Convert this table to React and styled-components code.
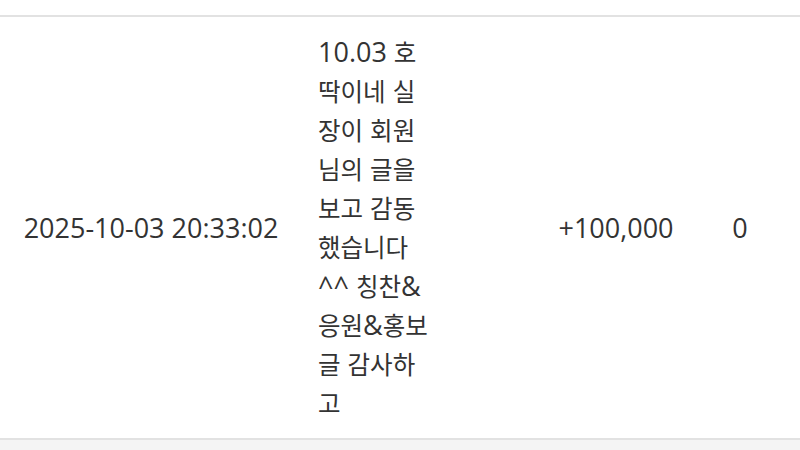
import React from 'react';
import styled, { createGlobalStyle } from 'styled-components';

const GlobalStyle = createGlobalStyle`
  html, body {
    margin: 0;
    padding: 0;
    background: #f4f4f4;
  }
  body {
    font-family: "Open Sans", "Noto Sans CJK KR", sans-serif;
    color: #333;
  }
`;

const Page = styled.div`
  width: 800px;
  height: 450px;
  overflow: hidden;
  background: #f4f4f4;
`;

const TopSpace = styled.div`
  height: 15px;
  background: #fff;
`;

const Row = styled.div`
  display: grid;
  grid-template-columns: 302px 238px 152px 96px 1fr;
  align-items: center;
  background: #fff;
  border-top: 2px solid #e2e2e2;
  border-bottom: 2px solid #e2e2e2;
  font-size: 27px;
  line-height: 39px;
`;

const Cell = styled.div`
  text-align: ${({ align }) => align || 'center'};
  white-space: nowrap;
`;

const Content = styled.div`
  padding: 15px 0 16px 16px;
  width: 118px;
  word-break: break-all;
  text-align: left;
`;

const Ko = styled.span`
  font-family: "Noto Sans CJK KR", sans-serif;
  font-size: 24.5px;
`;

const Keep = styled.span`
  white-space: nowrap;
`;

const HANGUL = /[\uac00-\ud7a3]/;

const formatText = (text) =>
  text.split(/([\uac00-\ud7a3]+|\^+)/).map((part, i) => {
    if (HANGUL.test(part)) return <Ko key={i}>{part}</Ko>;
    if (part.startsWith('^')) return <Keep key={i}>{part}</Keep>;
    return part;
  });

const row = {
  date: '2025-10-03 20:33:02',
  text: '10.03 호딱이네 실장이 회원님의 글을 보고 감동했습니다 ^^ 칭찬&응원&홍보글 감사하고',
  amount: '+100,000',
  balance: '0',
};

export default function App() {
  return (
    <Page>
      <GlobalStyle />
      <TopSpace />
      <Row>
        <Cell>{row.date}</Cell>
        <Content>{formatText(row.text)}</Content>
        <Cell>{row.amount}</Cell>
        <Cell>{row.balance}</Cell>
        <div />
      </Row>
    </Page>
  );
}
